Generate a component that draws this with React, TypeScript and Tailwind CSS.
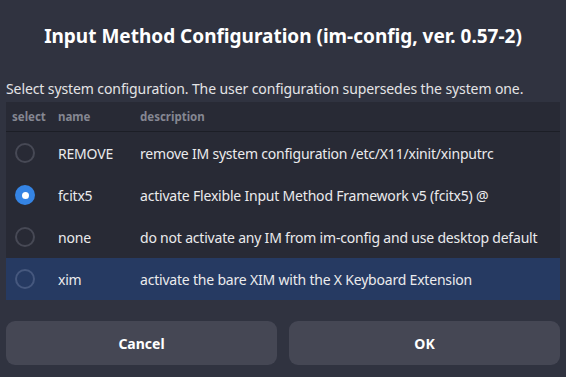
import React from "react";

const rows = [
  { name: "REMOVE", desc: "remove IM system configuration /etc/X11/xinit/xinputrc", checked: false, sel: false },
  { name: "fcitx5", desc: "activate Flexible Input Method Framework v5 (fcitx5) @", checked: true, sel: false },
  { name: "none", desc: "do not activate any IM from im-config and use desktop default", checked: false, sel: false },
  { name: "xim", desc: "activate the bare XIM with the X Keyboard Extension", checked: false, sel: true },
];

function Radio({ checked, sel }: { checked: boolean; sel: boolean }) {
  if (checked) {
    return (
      <div className="w-[20px] h-[20px] rounded-full bg-[#3584e4] flex items-center justify-center">
        <div className="w-[7px] h-[7px] rounded-full bg-white" />
      </div>
    );
  }
  return (
    <div
      className={
        "w-[20px] h-[20px] rounded-full border-2 " +
        (sel ? "border-[#46587e]" : "border-[#474955]")
      }
    />
  );
}

export default function App() {
  return (
    <div
      className="w-[566px] h-[377px] bg-[#303340] text-[#ebebed] flex flex-col px-[6px] overflow-hidden"
      style={{ fontFamily: '"Noto Sans", sans-serif' }}
    >
      <div className="h-[74px] flex items-center justify-center pb-[1px]">
        <h1 className="text-[19px] font-bold text-white">
          Input Method Configuration (im-config, ver. 0.57-2)
        </h1>
      </div>
      <div className="h-[28px] flex items-center text-[14px] text-[#e4e4e6] tracking-[-0.1px] whitespace-nowrap">
        Select system configuration. The user configuration supersedes the system one.
      </div>
      <div className="bg-[#282a35] flex flex-col">
        <div className="h-[30px] flex items-center text-[11.5px] font-bold text-[#858792] border-b border-[#1c1e26]">
          <div className="w-[52px] pl-[6px]">select</div>
          <div className="w-[82px]">name</div>
          <div>description</div>
        </div>
        {rows.map((r) => (
          <div
            key={r.name}
            className={
              "h-[42px] flex items-center text-[14px] tracking-[-0.2px] " +
              (r.sel ? "bg-[#263a62]" : "")
            }
          >
            <div className="w-[52px] pl-[9px] flex items-center">
              <Radio checked={r.checked} sel={r.sel} />
            </div>
            <div className="w-[82px]">{r.name}</div>
            <div className="whitespace-nowrap">{r.desc}</div>
          </div>
        ))}
      </div>
      <div className="flex gap-[12px] mt-[21px]">
        <button className="flex-1 h-[44px] rounded-[9px] bg-[#454754] text-white text-[14px] font-bold">
          Cancel
        </button>
        <button className="flex-1 h-[44px] rounded-[9px] bg-[#454754] text-white text-[14px] font-bold">
          OK
        </button>
      </div>
    </div>
  );
}
